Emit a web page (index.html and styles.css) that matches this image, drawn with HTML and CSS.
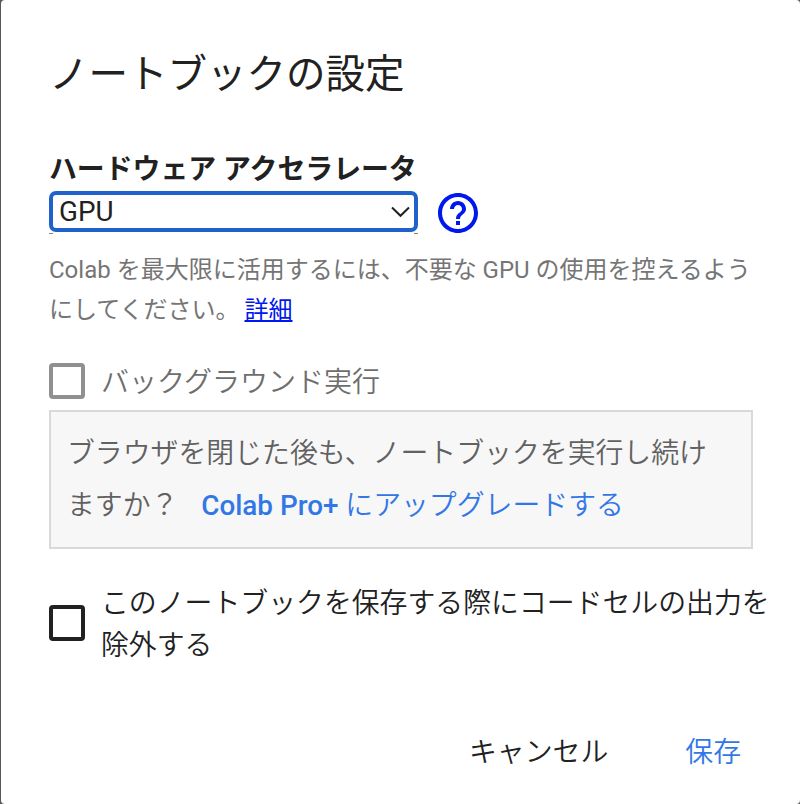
FILE: index.html
```html
<!DOCTYPE html>
<html lang="ja">
<head>
    <meta charset="UTF-8">
    <meta name="viewport" content="width=device-width, initial-scale=1.0">
    <title>ノートブックの設定</title>
    <link rel="stylesheet" href="styles.css">
</head>
<body>
    <div class="dialog">
        <h2 class="title">ノートブックの設定</h2>

        <form class="content">
            <div class="label">ハードウェア アクセラレータ</div>
            <div class="select-row">
                <div class="select-wrap">
                    <div class="select" tabindex="0">
                        <span>GPU</span>
                        <svg class="arrow" width="20" height="12" viewBox="0 0 20 12">
                            <path d="M2 1.500L10.500 9.800L19 1.500" fill="none" stroke="#212121" stroke-width="2"/>
                        </svg>
                    </div>
                </div>
                <a class="help" href="#">
                    <svg width="48" height="48" viewBox="0 0 24 24">
                        <path fill="#0018ee" d="M11 18h2v-2h-2v2zm1-16C6.48 2 2 6.48 2 12s4.480 10 10 10 10-4.480 10-10S17.520 2 12 2zm0 18c-4.410 0-8-3.590-8-8s3.590-8 8-8 8 3.590 8 8-3.590 8-8 8zm0-14c-2.210 0-4 1.790-4 4h2c0-1.100.9-2 2-2s2 .9 2 2c0 2-3 1.750-3 5h2c0-2.250 3-2.500 3-5 0-2.210-1.790-4-4-4z"/>
                    </svg>
                </a>
            </div>

            <p class="hint">Colab を最大限に活用するには、不要な GPU の使用を控えるよう<br>にしてください。 <a href="#">詳細</a></p>

            <div class="option disabled">
                <span class="checkbox"></span>
                <span class="option-text">バックグラウンド実行</span>
            </div>

            <div class="upgrade">
                ブラウザを閉じた後も、ノートブックを実行し続け<br>ますか？ <a href="#"><b>Colab Pro+</b> にアップグレードする</a>
            </div>

            <div class="option omit-output">
                <span class="checkbox"></span>
                <span class="option-text">このノートブックを保存する際にコードセルの出力を<br>除外する</span>
            </div>
        </form>

        <div class="buttons">
            <a class="cancel">キャンセル</a>
            <a class="save">保存</a>
        </div>
    </div>
</body>
</html>
```
FILE: styles.css
```css
* {
    margin: 0;
    padding: 0;
    box-sizing: border-box;
}

body {
    background: #58585a;
    font-family: Roboto, 'Noto Sans CJK JP', sans-serif;
    font-size: 27.87px;
    font-weight: 350;
    color: #212121;
    white-space: nowrap;
    overflow: hidden;
}

.dialog {
    height: 804px;
    margin-left: 1px;
    padding: 49px 0 0 48px;
    background: white;
    border-radius: 4px;
}

.title {
    font-size: 39.5px;
    font-weight: 400;
    line-height: 52px;
}

.label {
    margin-top: 48px;
    font-weight: 700;
    line-height: 42px;
}

.select-row {
    display: flex;
    gap: 16px;
}

/* only the ends of the underline show below the focus ring */
.select-wrap {
    width: 369px;
    height: 43px;
    background:
        linear-gradient(#888, #888) 0 100% / 4px 1px no-repeat,
        linear-gradient(#888, #888) 100% 100% / 4px 1px no-repeat;
}

.select {
    display: flex;
    align-items: center;
    justify-content: space-between;
    height: 41px;
    padding: 0 4px 0 6px;
    background: white;
    border: 4px solid #1f62cc;
    border-radius: 7px;
    font-size: 27.8px;
    font-weight: 400;
}

.help {
    height: 48px;
    margin-top: -2px;
}

.help svg {
    display: block;
}

.hint {
    margin-top: 13px;
    font-size: 24px;
    font-weight: 400;
    line-height: 40px;
    color: #757575;
}

.hint a {
    margin-left: -1px;
    color: #0018ee;
}

.option {
    display: flex;
    align-items: center;
    gap: 16px;
}

.disabled {
    height: 40px;
    margin-top: 31px;
    font-size: 28px;
    color: #6e6e6e;
}

.disabled .option-text {
    margin-top: -3px;
}

.checkbox {
    width: 36px;
    height: 36px;
    border: 4px solid #212121;
    border-radius: 4px;
}

.disabled .checkbox {
    border-color: #909090;
}

.upgrade {
    width: 704px;
    height: 139px;
    margin-top: 9px;
    padding: 16px 16px;
    background: #f7f7f7;
    border: 2px solid #d9d9d9;
    line-height: 52px;
    color: #616161;
}

.upgrade a {
    margin-left: 16px;
    color: #3377e6;
    text-decoration: none;
}

.upgrade b {
    font-weight: 500;
}

.omit-output {
    margin-top: 31px;
    line-height: 42px;
}

.omit-output .checkbox {
    margin-bottom: 2px;
}

.omit-output .option-text {
    margin-top: 3px;
}

.buttons {
    display: flex;
    justify-content: flex-end;
    gap: 77px;
    margin-top: 65px;
    padding-right: 59px;
    line-height: 42px;
}

.save {
    color: #3377e6;
}
```
